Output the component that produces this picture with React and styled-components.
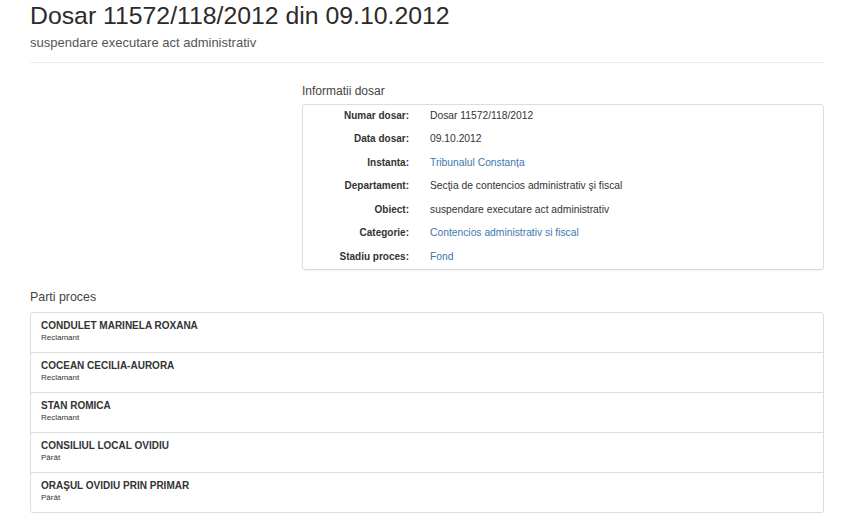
import React from "react";
import styled, { createGlobalStyle } from "styled-components";

const Global = createGlobalStyle`
  html, body { margin: 0; padding: 0; background: #fff; }
  body { font-family: "Liberation Sans", Arial, Helvetica, sans-serif; color: #333; }
`;

const Page = styled.div`
  width: 794px;
  margin-left: 30px;
`;

const Title = styled.h1`
  margin: 2px 0 0;
  font-size: 24.8px;
  line-height: 27px;
  font-weight: normal;
  color: #2b2b2b;
`;

const Subtitle = styled.div`
  margin-top: 5.5px;
  font-size: 13px;
  line-height: 16px;
  color: #555;
`;

const Rule = styled.hr`
  margin: 11.5px 0 0;
  border: 0;
  border-top: 1px solid #eee;
  height: 0;
`;

const InfoSection = styled.section`
  margin-left: 272px;
`;

const SectionTitle = styled.h3`
  margin: ${(p) => p.$top}px 0 0;
  font-size: ${(p) => p.$size}px;
  line-height: 14px;
  font-weight: normal;
  color: #444;
`;

const Panel = styled.div`
  margin-top: ${(p) => p.$top}px;
  padding-top: ${(p) => p.$padTop || 0}px;
  border: 1px solid #ddd;
  border-radius: 3px;
  box-shadow: 0 1px 1px rgba(0, 0, 0, 0.05);
  background: #fff;
`;

const InfoRow = styled.div`
  display: grid;
  grid-template-columns: 106px 1fr;
  column-gap: 21px;
  line-height: 20px;
  padding-bottom: 3.5px;
  &:last-child { padding-bottom: 2.5px; }
`;

const Label = styled.div`
  text-align: right;
  font-weight: bold;
  font-size: 10px;
  color: #333;
`;

const Value = styled.div`
  font-size: 10.3px;
  color: ${(p) => (p.$link ? "#3d78ad" : "#333")};
`;

const Party = styled.div`
  height: 39px;
  box-sizing: content-box;
  padding: 0 10px;
  border-bottom: 1px solid #ddd;
  &:last-child { border-bottom: 0; }
`;

const PartyName = styled.div`
  padding-top: 7px;
  font-size: 10px;
  line-height: 12px;
  font-weight: bold;
  color: #333;
`;

const PartyRole = styled.div`
  margin-top: 1.7px;
  font-size: 8px;
  line-height: 10px;
  color: #333;
`;

const info = [
  ["Numar dosar:", "Dosar 11572/118/2012"],
  ["Data dosar:", "09.10.2012"],
  ["Instanta:", "Tribunalul Constanța", true],
  ["Departament:", "Secţia de contencios administrativ şi fiscal"],
  ["Obiect:", "suspendare executare act administrativ"],
  ["Categorie:", "Contencios administrativ si fiscal", true],
  ["Stadiu proces:", "Fond", true],
];

const parties = [
  ["CONDULET MARINELA ROXANA", "Reclamant"],
  ["COCEAN CECILIA-AURORA", "Reclamant"],
  ["STAN ROMICA", "Reclamant"],
  ["CONSILIUL LOCAL OVIDIU", "Pârât"],
  ["ORAŞUL OVIDIU PRIN PRIMAR", "Pârât"],
];

export default function App() {
  return (
    <>
      <Global />
      <Page>
        <Title>Dosar 11572/118/2012 din 09.10.2012</Title>
        <Subtitle>suspendare executare act administrativ</Subtitle>
        <Rule />
        <InfoSection>
          <SectionTitle $top={20.8} $size={12}>Informatii dosar</SectionTitle>
          <Panel $top={6.2} $padTop={1}>
            {info.map(([l, v, link]) => (
              <InfoRow key={l}>
                <Label>{l}</Label>
                <Value $link={link}>{v}</Value>
              </InfoRow>
            ))}
          </Panel>
        </InfoSection>
        <SectionTitle $top={20} $size={12.4}>Parti proces</SectionTitle>
        <Panel $top={7.3}>
          {parties.map(([n, r]) => (
            <Party key={n}>
              <PartyName>{n}</PartyName>
              <PartyRole>{r}</PartyRole>
            </Party>
          ))}
        </Panel>
      </Page>
    </>
  );
}
